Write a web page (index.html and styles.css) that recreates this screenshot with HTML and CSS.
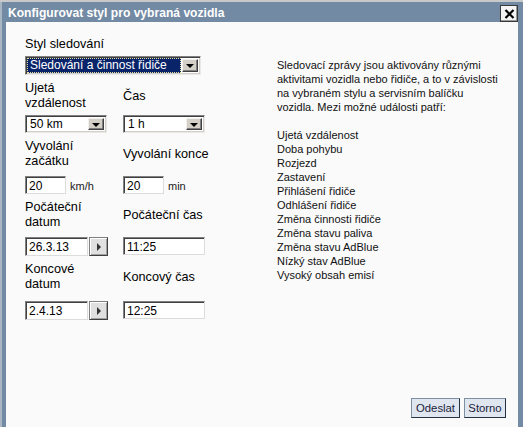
FILE: index.html
```html
<!DOCTYPE html>
<html lang="cs">
<head>
<meta charset="utf-8">
<title>Konfigurovat styl pro vybraná vozidla</title>
<link rel="stylesheet" href="styles.css">
</head>
<body>
<div class="dialog">
  <div class="titlebar">
    <span class="title">Konfigurovat styl pro vybraná vozidla</span>
    <span class="close"><svg width="11" height="10" viewBox="0 0 11 10"><path d="M1.5 1 L9.5 9 M9.5 1 L1.5 9" stroke="#000" stroke-width="2.2" fill="none"/></svg></span>
  </div>
  <div class="content">
    <div class="main">
      <div class="left">
        <div class="toplabel">Styl sledování</div>
        <div class="select wide">
          <span class="value selected"><span class="focus">Sledování a činnost řidiče</span></span>
          <span class="arrow"><span class="tri-down"></span></span>
        </div>

        <div class="row r1">
          <div class="field">
            <div class="lbl">Ujetá<br>vzdálenost</div>
            <div class="ctl"><div class="select small"><span class="value">50 km</span><span class="arrow"><span class="tri-down"></span></span></div></div>
          </div>
          <div class="field">
            <div class="lbl">Čas</div>
            <div class="ctl"><div class="select small"><span class="value">1 h</span><span class="arrow"><span class="tri-down"></span></span></div></div>
          </div>
        </div>

        <div class="row r2">
          <div class="field">
            <div class="lbl">Vyvolání<br>začátku</div>
            <div class="ctl inline"><span class="input short">20</span><span class="unit">km/h</span></div>
          </div>
          <div class="field">
            <div class="lbl">Vyvolání konce</div>
            <div class="ctl inline"><span class="input short">20</span><span class="unit">min</span></div>
          </div>
        </div>

        <div class="row r3">
          <div class="field">
            <div class="lbl">Počáteční<br>datum</div>
            <div class="ctl inline"><span class="input date">26.3.13</span><span class="datebtn"><span class="tri-right"></span></span></div>
          </div>
          <div class="field">
            <div class="lbl">Počáteční čas</div>
            <div class="ctl"><span class="input time">11:25</span></div>
          </div>
        </div>

        <div class="row r4">
          <div class="field">
            <div class="lbl">Koncové<br>datum</div>
            <div class="ctl inline"><span class="input date">2.4.13</span><span class="datebtn"><span class="tri-right"></span></span></div>
          </div>
          <div class="field">
            <div class="lbl">Koncový čas</div>
            <div class="ctl"><span class="input time">12:25</span></div>
          </div>
        </div>
      </div>
      <div class="right">
        <p class="info">Sledovací zprávy jsou aktivovány různými<br>aktivitami vozidla nebo řidiče, a to v závislosti<br>na vybraném stylu a servisním balíčku<br>vozidla. Mezi možné události patří:</p>
        <ul class="events">
          <li>Ujetá vzdálenost</li>
          <li>Doba pohybu</li>
          <li>Rozjezd</li>
          <li>Zastavení</li>
          <li>Přihlášení řidiče</li>
          <li>Odhlášení řidiče</li>
          <li>Změna činnosti řidiče</li>
          <li>Změna stavu paliva</li>
          <li>Změna stavu AdBlue</li>
          <li>Nízký stav AdBlue</li>
          <li>Vysoký obsah emisí</li>
        </ul>
      </div>
    </div>
    <div class="footer">
      <span class="btn send">Odeslat</span>
      <span class="btn cancel">Storno</span>
    </div>
  </div>
</div>
</body>
</html>
```
FILE: styles.css
```css
* { box-sizing: border-box; }
html, body { margin: 0; padding: 0; }
body {
  width: 523px;
  height: 427px;
  overflow: hidden;
  background: #c9c9c9;
  font-family: "Liberation Sans", Arial, sans-serif;
  color: #000;
}
.dialog {
  margin-top: 2px;
  width: 523px;
  height: 429px;
  background: #728aa3;
  border-left: 2px solid #a9b6c4;
  padding: 0 5px 4px 4px;
  display: flex;
  flex-direction: column;
}
.titlebar {
  height: 20px;
  display: flex;
  align-items: center;
  justify-content: space-between;
  padding-left: 2px;
}
.title {
  color: #fff;
  font-weight: bold;
  font-size: 12.1px;
  line-height: 16px;
  margin-top: 1px;
}
.close {
  width: 18px;
  height: 17px;
  margin-top: 3px;
  background: #f4f4f4;
  border: 1px solid #3a3a3a;
  box-shadow: inset -1px -1px 0 #9a9a9a;
  display: flex;
  align-items: center;
  justify-content: center;
}
.content {
  flex: 1;
  background: #fafafa;
  display: flex;
  flex-direction: column;
  padding: 15px 12px 9px 19px;
}
.main {
  display: flex;
  flex: 1;
}
.left {
  width: 252px;
  font-size: 12.7px;
}
.toplabel {
  line-height: 15px;
  height: 15px;
}
.select {
  display: flex;
  background: #fff;
  border: 1px solid;
  border-color: #808080 #e8e8e8 #e8e8e8 #808080;
  box-shadow: inset 1px 1px 0 #404040, inset -1px -1px 0 #d4d0c8;
  padding: 2px;
  font-size: 12px;
}
.select.wide {
  width: 176px;
  height: 19px;
  margin-top: 4px;
  padding: 1px 2px 1px 1px;
}
.select.small {
  width: 82px;
  height: 18px;
}
.value {
  flex: 1;
  line-height: 13px;
  padding-left: 2px;
  white-space: nowrap;
  overflow: hidden;
}
.value.selected {
  background: #0a246a;
  color: #fff;
  padding: 0;
  margin-right: 1px;
}
.focus {
  display: block;
  height: 100%;
  border: 1px dotted #e8e0a0;
  padding-left: 2px;
  line-height: 13px;
}
.arrow {
  width: 16px;
  background: #d4d0c8;
  border: 1px solid;
  border-color: #f0f0f0 #404040 #404040 #f0f0f0;
  box-shadow: inset -1px -1px 0 #808080;
  display: flex;
  align-items: center;
  justify-content: center;
}
.select.wide .arrow { margin: 1px 0; }
.tri-down {
  width: 0;
  height: 0;
  border-left: 4px solid transparent;
  border-right: 4px solid transparent;
  border-top: 4px solid #000;
  margin-top: 1px;
}
.row {
  display: grid;
  grid-template-columns: 98px 1fr;
  margin-top: 6px;
}
.lbl {
  height: 30px;
  display: flex;
  align-items: center;
  line-height: 15px;
}
.ctl { display: flex; align-items: center; }
.r1 .ctl { margin-top: 4px; }
.r2 .ctl { margin-top: 7px; }
.r3 .ctl { margin-top: 7px; }
.r4 .ctl { margin-top: 9px; }
.input {
  display: block;
  background: #fff;
  border: 1px solid;
  border-color: #808080 #dcdcdc #dcdcdc #808080;
  box-shadow: inset 1px 1px 0 #404040;
  font-size: 12px;
  line-height: 14px;
  padding: 2px 2px 0 3px;
  white-space: nowrap;
}
.input.short { width: 41px; height: 18px; }
.input.date { width: 63px; height: 19px; }
.input.time { width: 82px; height: 18px; }
.unit {
  font-size: 11px;
  color: #222;
  margin-left: 4px;
  margin-top: 2px;
}
.datebtn {
  width: 19px;
  height: 19px;
  margin-left: 1px;
  background: #e0e0e0;
  border: 1px solid;
  border-color: #808080 #404040 #404040 #808080;
  box-shadow: inset 1px 1px 0 #fff, inset -1px -1px 0 #a0a0a0;
  display: flex;
  align-items: center;
  justify-content: center;
}
.tri-right {
  width: 0;
  height: 0;
  border-top: 4px solid transparent;
  border-bottom: 4px solid transparent;
  border-left: 4px solid #333;
  margin-left: 1px;
}
.right {
  flex: 1;
  padding-top: 21px;
  font-size: 11px;
  line-height: 14px;
  color: #111;
}
.info { margin: 0; }
.events {
  list-style: none;
  margin: 14px 0 0;
  padding: 0;
}
.footer {
  display: flex;
  justify-content: flex-end;
  gap: 4px;
}
.btn {
  height: 20px;
  background: #dfe6ef;
  border: 1px solid;
  border-color: #7d8fa3 #26323f #26323f #7d8fa3;
  font-size: 11.3px;
  line-height: 18px;
  color: #1c1c3c;
  text-align: center;
}
.btn.send { width: 49px; }
.btn.cancel { width: 42px; }
```
